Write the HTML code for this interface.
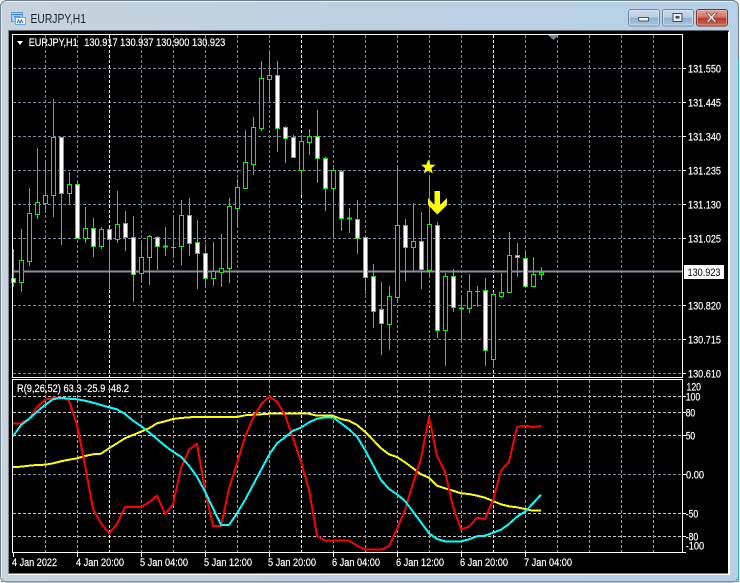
<!DOCTYPE html>
<html><head><meta charset="utf-8"><style>
html,body{margin:0;padding:0;background:#fff;width:740px;height:583px;overflow:hidden}
svg{position:absolute;left:0;top:0;display:block}
text{font-family:"Liberation Sans",sans-serif;font-size:11px;fill:#fff;stroke:#fff;stroke-width:.2px}
</style></head><body>
<svg width="740" height="583" viewBox="0 0 740 583" xmlns="http://www.w3.org/2000/svg">
<defs>
<linearGradient id="f" x1="0" x2="1" y1="0" y2="0"><stop offset="0" stop-color="#c7d3dd"/><stop offset=".5" stop-color="#bcd0e2"/><stop offset="1" stop-color="#b6d0e8"/></linearGradient>
<linearGradient id="b" x1="0" x2="0" y1="0" y2="1"><stop offset="0" stop-color="#cfdeec"/><stop offset=".48" stop-color="#b5cce0"/><stop offset=".52" stop-color="#8fb0cd"/><stop offset="1" stop-color="#a9c8e2"/></linearGradient>
<linearGradient id="c" x1="0" x2="0" y1="0" y2="1"><stop offset="0" stop-color="#e0a498"/><stop offset=".48" stop-color="#cf7565"/><stop offset=".52" stop-color="#b83d2c"/><stop offset="1" stop-color="#c96a55"/></linearGradient>
</defs>
<!-- window frame -->
<rect x=".5" y=".5" width="738" height="581.5" rx="6" fill="url(#f)" stroke="#6d7f8e"/>
<path d="M1.5 6V578M6 1.5H733" stroke="#eef3f7" fill="none"/>
<path d="M1 581.5H738.5M738.5 60V582" stroke="#2fb4c4" fill="none"/>
<rect x="8" y="30" width="722" height="545" fill="#fff"/>
<rect x="8" y="30" width="721" height="2" fill="#59656f"/>
<rect x="8" y="30" width="1" height="544" fill="#808890"/>
<rect x="9" y="31" width="719" height="542.5" fill="#000"/>
<!-- icon -->
<rect x="11.5" y="12.5" width="11" height="9" fill="#a9cdf0" stroke="#5b9be0"/>
<path d="M12 14.5H22" stroke="#3f86d8"/>
<path d="M14 17l2-1 2 1 2-1" stroke="#3f86d8" fill="none"/>
<rect x="15.5" y="17.5" width="10" height="7" fill="#f2f8ff" stroke="#6eaae8"/>
<path d="M17 23l1.500-3 1.500 3 1.500-3 1.500 3" stroke="#2f78cc" fill="none"/>
<text x="30.500" y="23" textLength="55.500" lengthAdjust="spacingAndGlyphs" style="font-size:12.500px;fill:#18242e;stroke:none">EURJPY,H1</text>
<!-- buttons -->
<rect x="628.500" y="9.500" width="31" height="16.500" rx="2.500" fill="url(#b)" stroke="#6b8aa4"/>
<rect x="629.500" y="10.500" width="29" height="14.500" rx="1.500" fill="none" stroke="#d9e6f0" stroke-opacity=".7"/>
<rect x="638.500" y="17.500" width="10" height="3.500" fill="#f0f3f6" stroke="#46566a"/>
<rect x="662.500" y="9.500" width="31" height="16.500" rx="2.500" fill="url(#b)" stroke="#6b8aa4"/>
<rect x="663.500" y="10.500" width="29" height="14.500" rx="1.500" fill="none" stroke="#d9e6f0" stroke-opacity=".7"/>
<rect x="673" y="13.500" width="9" height="8" fill="#e8eef3" stroke="#3d4d60"/>
<rect x="675.500" y="16" width="4" height="2.500" fill="#3d4d60"/>
<rect x="696.500" y="9.500" width="31" height="16.500" rx="2.500" fill="url(#c)" stroke="#7d3026"/>
<rect x="697.500" y="10.500" width="29" height="14.500" rx="1.500" fill="none" stroke="#efc4bc" stroke-opacity=".6"/>
<path d="M706 13h3l2.500 3 2.500-3h3l-4 4.500 4 4.500h-3l-2.500-3-2.500 3h-3l4-4.500z" fill="#f4f2f0" stroke="#6d3a32" stroke-width=".6"/>
<!-- chart frames -->
<g shape-rendering="crispEdges">
<!-- main grid -->
<path d="M13 68.500H682M13 102.500H682M13 136.500H682M13 170.500H682M13 204.500H682M13 238.500H682M13 305.500H682M13 339.500H682M13 373.500H682" stroke="#778899" stroke-dasharray="3 2" fill="none"/>
<path d="M45.500 35V377M77.500 35V377M141.500 35V377M173.500 35V377M205.500 35V377M237.500 35V377M269.500 35V377M333.500 35V377M365.500 35V377M397.500 35V377M429.500 35V377M461.500 35V377M525.500 35V377M557.500 35V377M589.500 35V377M621.500 35V377M653.500 35V377" stroke="#778899" stroke-dasharray="3 2" fill="none"/>
<path d="M109.500 35V377M301.500 35V377M493.500 35V377" stroke="#fff" stroke-dasharray="3 2" fill="none"/>
<path d="M13 271.500H682" stroke="#8492a0" stroke-width="2" fill="none"/>
<!-- wicks -->
<path fill="none" stroke="#10ee10" d="M13.500 249V287M21.500 229V292M29.500 188V266M37.500 148V219M45.500 161V211M53.500 99V217M61.500 137V245M69.500 172V205M77.500 182V238M85.500 207V243M93.500 218V257M101.500 227V249M109.500 228V289M117.500 191V243M125.500 211V251M133.500 216V302M141.500 243V283M149.500 235V285M157.500 236V270M165.500 227V256M173.500 218V258M181.500 200V265M189.500 198V256M197.500 220V289M205.500 244V288M213.500 242V286M221.500 234V287M229.500 198V283M237.500 179V228M245.500 130V188M253.500 117V175M261.500 61V131M269.500 52V102M277.500 61V152M285.500 126V163M293.500 135V157M301.500 135V195M309.500 129V155M317.500 110V183M325.500 157V211M333.500 167V237M341.500 170V231M349.500 208V233M357.500 200V254M365.500 237V294M373.500 264V328M381.500 282V355M389.500 286V350M397.500 166V303M405.500 219V281M413.500 203V271M421.500 212V289M429.500 177V278M437.500 222V338M445.500 273V366M453.500 269V312M461.500 298V343M469.500 274V313M477.500 286V307M485.500 278V366M493.500 292V368M501.500 273V298M509.500 232V293M517.500 243V277M525.500 251V287M533.500 257V286M541.500 267V280"/>
<!-- hollow bodies -->
<g fill="#000" stroke="#10ee10">
<rect x="19.500" y="260.500" width="4" height="22"/><rect x="27.500" y="213.500" width="4" height="48"/><rect x="35.500" y="202.500" width="4" height="12"/><rect x="43.500" y="195.500" width="4" height="8"/><rect x="51.500" y="137.500" width="4" height="58"/><rect x="67.500" y="184.500" width="4" height="9"/><rect x="83.500" y="228.500" width="4" height="10"/><rect x="99.500" y="229.500" width="4" height="17"/><rect x="115.500" y="224.500" width="4" height="15"/><rect x="139.500" y="257.500" width="4" height="16"/><rect x="147.500" y="236.500" width="4" height="21"/><rect x="179.500" y="215.500" width="4" height="31"/><rect x="211.500" y="271.500" width="4" height="7"/><rect x="219.500" y="268.500" width="4" height="4"/><rect x="227.500" y="206.500" width="4" height="62"/><rect x="235.500" y="187.500" width="4" height="21"/><rect x="243.500" y="162.500" width="4" height="26"/><rect x="251.500" y="127.500" width="4" height="37"/><rect x="259.500" y="78.500" width="4" height="50"/><rect x="267.500" y="75.500" width="4" height="4"/><rect x="299.500" y="141.500" width="4" height="29"/><rect x="307.500" y="136.500" width="4" height="6"/><rect x="331.500" y="170.500" width="4" height="18"/><rect x="387.500" y="296.500" width="4" height="28"/><rect x="395.500" y="225.500" width="4" height="72"/><rect x="411.500" y="241.500" width="4" height="6"/><rect x="427.500" y="224.500" width="4" height="46"/><rect x="443.500" y="276.500" width="4" height="54"/><rect x="467.500" y="291.500" width="4" height="17"/><rect x="491.500" y="294.500" width="4" height="65"/><rect x="499.500" y="292.500" width="4" height="4"/><rect x="507.500" y="255.500" width="4" height="37"/><rect x="531.500" y="274.500" width="4" height="12"/><rect x="539.500" y="272.500" width="4" height="2"/>
</g>
<!-- filled bodies -->
<g fill="#fff" stroke="#10ee10">
<rect x="11.500" y="278.500" width="4" height="4"/><rect x="59.500" y="137.500" width="4" height="56"/><rect x="75.500" y="184.500" width="4" height="54"/><rect x="91.500" y="228.500" width="4" height="18"/><rect x="107.500" y="229.500" width="4" height="10"/><rect x="123.500" y="223.500" width="4" height="14"/><rect x="131.500" y="237.500" width="4" height="37"/><rect x="155.500" y="237.500" width="4" height="9"/><rect x="187.500" y="215.500" width="4" height="28"/><rect x="195.500" y="242.500" width="4" height="11"/><rect x="203.500" y="253.500" width="4" height="25"/><rect x="275.500" y="75.500" width="4" height="53"/><rect x="283.500" y="127.500" width="4" height="11"/><rect x="291.500" y="137.500" width="4" height="20"/><rect x="315.500" y="136.500" width="4" height="22"/><rect x="323.500" y="158.500" width="4" height="30"/><rect x="339.500" y="171.500" width="4" height="47"/><rect x="355.500" y="219.500" width="4" height="19"/><rect x="363.500" y="237.500" width="4" height="40"/><rect x="371.500" y="276.500" width="4" height="35"/><rect x="379.500" y="309.500" width="4" height="14"/><rect x="403.500" y="225.500" width="4" height="22"/><rect x="419.500" y="241.500" width="4" height="28"/><rect x="435.500" y="225.500" width="4" height="105"/><rect x="451.500" y="276.500" width="4" height="31"/><rect x="483.500" y="290.500" width="4" height="60"/><rect x="515.500" y="255.500" width="4" height="2"/><rect x="523.500" y="258.500" width="4" height="28"/>
</g>
<!-- dojis -->
<path d="M163 246H168M163 247H168M171 247.500H176M347 218H352M347 219H352M459 308H464M459 309H464M475 291.500H480" stroke="#10ee10" fill="none"/>
<!-- indicator grid -->
<path d="M13 396.500H682M13 412.500H682M13 435.500H682M13 513.500H682M13 536.500H682" stroke="#c4c8cc" stroke-dasharray="3 2" fill="none"/>
<path d="M13 474.500H682" stroke="#778899" stroke-dasharray="3 2" fill="none"/>
<path d="M45.500 380V552M77.500 380V552M141.500 380V552M173.500 380V552M205.500 380V552M237.500 380V552M269.500 380V552M333.500 380V552M365.500 380V552M397.500 380V552M429.500 380V552M461.500 380V552M525.500 380V552M557.500 380V552M589.500 380V552M621.500 380V552M653.500 380V552" stroke="#9aa4ae" stroke-dasharray="3 2" fill="none"/>
<path d="M109.500 380V552M301.500 380V552M493.500 380V552" stroke="#fff" stroke-dasharray="3 2" fill="none"/>
<!-- frames -->
<rect x="12.500" y="34.500" width="670" height="343" fill="none" stroke="#fff"/>
<rect x="12.500" y="379.500" width="670" height="173" fill="none" stroke="#fff"/>
<!-- ticks -->
<path d="M683 68.500H686M683 102.500H686M683 136.500H686M683 170.500H686M683 204.500H686M683 238.500H686M683 305.500H686M683 339.500H686M683 373.500H686M683 396.500H686M683 412.500H686M683 435.500H686M683 474.500H686M683 513.500H686M683 536.500H686M683 552.500H686" stroke="#fff" fill="none"/>
<path d="M13.500 553V557M77.500 553V557M141.500 553V557M205.500 553V557M269.500 553V557M333.500 553V557M397.500 553V557M461.500 553V557M525.500 553V557" stroke="#fff" fill="none"/>
</g>
<!-- indicator lines -->
<g fill="none" stroke-width="2" stroke-linejoin="round" shape-rendering="crispEdges">
<polyline stroke="#ffff00" points="13,467 21,466.700 29,465.700 37,465 45,464.700 53,463.300 61,461.300 69,459.700 77,458.300 85,456 93,454.300 101,453.700 109,448.300 117,443.300 125,438.300 133,435 141,431.700 149,428.300 157,423.300 165,421.300 173,419 181,418 189,417.300 197,417 205,417 237,417 245,415.300 253,414.700 261,414.300 269,413.700 309,413.700 317,415.700 333,415.700 341,419 349,420.700 357,425 365,431.700 373,440 381,448.300 389,454.300 397,457 405,462.300 413,468.300 421,474.300 429,477.700 437,485.700 445,488.300 453,490.700 461,493.300 469,494 477,495.700 485,497.700 493,501 501,504.300 509,506.300 517,507.300 525,509 533,510.700 541,510.700"/>
<polyline stroke="#ff0000" points="13,423.300 21,423.300 29,419 37,407 45,400 53,397.700 61,397.700 69,400.300 77,425 85,465 93,509 101,523.300 109,533.300 117,524 125,507 133,507 141,507 149,502.300 157,495.700 165,514 173,504.300 181,468.300 189,449.700 197,443.700 205,490 213,526 221,526 229,488.300 237,463.300 245,436.700 253,418.300 261,404.300 269,396.700 277,401.700 285,415 293,438 301,461.700 309,490 317,535.700 325,540.700 333,540.700 341,540.700 349,540.700 357,545.700 365,549.700 373,549.700 381,549.700 389,546.300 397,529 405,510 413,483.300 421,458.300 429,417.300 437,456 445,471.700 453,506.700 461,529.300 469,526.700 477,517.700 485,519 493,500 501,470.700 509,461.700 517,427 525,425.700 533,427 541,426"/>
<polyline stroke="#00ffff" points="13,436.300 21,425 29,419 37,411.700 45,405 53,399.300 61,397.700 69,398.700 77,399.300 85,400.700 93,402.700 101,405 109,407.300 117,409.300 125,414 133,420.700 141,426 149,432.300 157,439 165,445.700 173,451.700 181,456.700 189,465.700 197,476.700 205,491.700 213,508.300 221,525 229,525 237,513.300 245,500 253,485 261,470 269,455 277,443.300 285,437.300 293,430.700 301,427.700 309,422.300 317,418.700 325,417.300 333,417.300 341,423.300 349,429.300 357,436.700 365,450 373,465 381,480 389,489 397,494.300 405,501 413,511.700 421,522.300 429,533.300 437,539 445,541.300 453,541.700 461,541.300 469,539.300 477,536.300 485,535.700 493,532.700 501,529.700 509,524 517,516.700 525,511.700 533,503.300 541,494.700"/>
</g>
<!-- star and arrow -->
<polygon points="428.300,159.500 430.300,164.600 435.500,164.800 431.400,168.200 432.800,173.500 428.300,170.500 423.800,173.500 425.200,168.200 421.100,164.800 426.300,164.600" fill="#ffff00"/>
<polygon points="434.500,191 440,191 440,205 447,198 447,205 437.300,214.500 428,205 428,198 434.500,205" fill="#ffff00"/>
<!-- top markers -->
<polygon points="17,41 23,41 20,45" fill="#fff"/>
<polygon points="548,35 559,35 553.500,40" fill="#778899"/>
<!-- legends -->
<text x="28.700" y="46" textLength="49" lengthAdjust="spacingAndGlyphs">EURJPY,H1</text>
<text x="84.300" y="46" textLength="141" lengthAdjust="spacingAndGlyphs">130.917 130.937 130.900 130.923</text>
<text x="17" y="392" textLength="112" lengthAdjust="spacingAndGlyphs">R(9,26,52) 63.3 -25.9 -48.2</text>
<!-- price labels -->
<text x="688" y="72.500" textLength="33" lengthAdjust="spacingAndGlyphs">131.550</text>
<text x="688" y="106.500" textLength="33" lengthAdjust="spacingAndGlyphs">131.445</text>
<text x="688" y="140.500" textLength="33" lengthAdjust="spacingAndGlyphs">131.340</text>
<text x="688" y="174.500" textLength="33" lengthAdjust="spacingAndGlyphs">131.235</text>
<text x="688" y="208.500" textLength="33" lengthAdjust="spacingAndGlyphs">131.130</text>
<text x="688" y="242.500" textLength="33" lengthAdjust="spacingAndGlyphs">131.025</text>
<rect x="684" y="265" width="40" height="14" fill="#fff"/>
<text x="687.500" y="276" textLength="33" lengthAdjust="spacingAndGlyphs" style="fill:#000;stroke:none">130.923</text>
<text x="688" y="309.500" textLength="33" lengthAdjust="spacingAndGlyphs">130.820</text>
<text x="688" y="343.500" textLength="33" lengthAdjust="spacingAndGlyphs">130.715</text>
<text x="688" y="377.500" textLength="33" lengthAdjust="spacingAndGlyphs">130.610</text>
<text x="686.500" y="390.500" textLength="14.500" lengthAdjust="spacingAndGlyphs">120</text>
<text x="685.700" y="400.500" textLength="14.500" lengthAdjust="spacingAndGlyphs">100</text>
<text x="685.700" y="416.500" textLength="9.500" lengthAdjust="spacingAndGlyphs">80</text>
<text x="685.700" y="439.500" textLength="9.500" lengthAdjust="spacingAndGlyphs">50</text>
<text x="686" y="478.500" textLength="18" lengthAdjust="spacingAndGlyphs">0.00</text>
<text x="685.700" y="517.500" textLength="12.500" lengthAdjust="spacingAndGlyphs">-50</text>
<text x="685.700" y="540.500" textLength="12.500" lengthAdjust="spacingAndGlyphs">-80</text>
<text x="685.700" y="549.500" textLength="18.500" lengthAdjust="spacingAndGlyphs">-100</text>
<!-- time labels -->
<text x="12" y="566" textLength="45" lengthAdjust="spacingAndGlyphs">4 Jan 2022</text>
<text x="76" y="566" textLength="48" lengthAdjust="spacingAndGlyphs">4 Jan 20:00</text>
<text x="140" y="566" textLength="48" lengthAdjust="spacingAndGlyphs">5 Jan 04:00</text>
<text x="204" y="566" textLength="48" lengthAdjust="spacingAndGlyphs">5 Jan 12:00</text>
<text x="268" y="566" textLength="48" lengthAdjust="spacingAndGlyphs">5 Jan 20:00</text>
<text x="332" y="566" textLength="48" lengthAdjust="spacingAndGlyphs">6 Jan 04:00</text>
<text x="396" y="566" textLength="48" lengthAdjust="spacingAndGlyphs">6 Jan 12:00</text>
<text x="460" y="566" textLength="48" lengthAdjust="spacingAndGlyphs">6 Jan 20:00</text>
<text x="524" y="566" textLength="48" lengthAdjust="spacingAndGlyphs">7 Jan 04:00</text>
</svg>
</body></html>
